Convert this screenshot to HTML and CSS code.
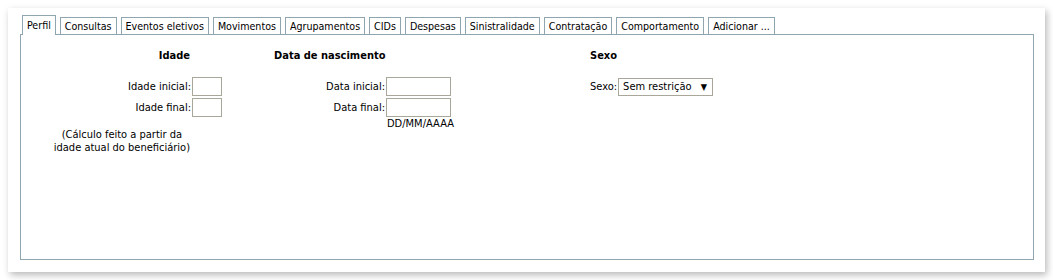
FILE: index.html
```html
<!DOCTYPE html>
<html lang="pt">
<head>
<meta charset="utf-8">
<link rel="stylesheet" href="styles.css">
</head>
<body>
<div class="card">
  <div class="tabs">
    <span class="tab active">Perfil</span>
    <span class="tab">Consultas</span>
    <span class="tab">Eventos eletivos</span>
    <span class="tab">Movimentos</span>
    <span class="tab">Agrupamentos</span>
    <span class="tab">CIDs</span>
    <span class="tab">Despesas</span>
    <span class="tab">Sinistralidade</span>
    <span class="tab">Contratação</span>
    <span class="tab">Comportamento</span>
    <span class="tab">Adicionar ...</span>
  </div>
  <div class="panel">
    <div class="col col-idade">
      <div class="heading">Idade</div>
      <div class="row"><label>Idade inicial:</label><span class="input small"></span></div>
      <div class="row"><label>Idade final:</label><span class="input small"></span></div>
      <div class="note">(Cálculo feito a partir da<br>idade atual do beneficiário)</div>
    </div>
    <div class="col col-data">
      <div class="heading">Data de nascimento</div>
      <div class="row"><label>Data inicial:</label><span class="input wide"></span></div>
      <div class="row"><label>Data final:</label><span class="input wide"></span></div>
      <div class="hint">DD/MM/AAAA</div>
    </div>
    <div class="col col-sexo">
      <div class="heading">Sexo</div>
      <div class="row"><label>Sexo:</label><span class="select">Sem restrição<span class="arrow">▼</span></span></div>
    </div>
  </div>
</div>
</body>
</html>
```

FILE: styles.css
```css
* { box-sizing: border-box; }
html, body { margin: 0; padding: 0; background: #fff; }
body {
  padding: 8px;
  font-family: "DejaVu Sans Condensed", "DejaVu Sans", sans-serif;
  font-stretch: condensed;
  font-size: 11px;
  color: #000;
}
.card {
  width: 1037px;
  height: 264px;
  background: #fff;
  box-shadow: 2px 3px 7px rgba(0, 0, 0, 0.28);
  padding: 7px 11px 12px 12px;
  display: flex;
  flex-direction: column;
}
.tabs {
  display: flex;
  align-items: flex-end;
  gap: 4px;
  padding-left: 2px;
  height: 19px;
  position: relative;
  z-index: 1;
  font-size: 10.6px;
}
.tab {
  display: block;
  height: 17px;
  line-height: 17px;
  padding: 0 4px;
  border: 1px solid #8fa5b0;
  border-bottom: none;
  background: #fff;
  white-space: nowrap;
}
.tab.active {
  height: 20px;
  line-height: 19px;
  margin-bottom: -1px;
}
.panel {
  flex: 1;
  border: 1px solid #8fa5b0;
  display: flex;
  padding-top: 14px;
}
.heading {
  font-family: "DejaVu Sans Condensed", "DejaVu Sans", sans-serif;
  font-stretch: condensed;
  font-weight: bold;
  font-size: 11px;
  height: 27px;
}
.row {
  display: flex;
  align-items: center;
  height: 21px;
}
.row label { white-space: nowrap; }
.input {
  display: block;
  height: 19px;
  border: 1px solid #a9a79a;
  background: #fff;
  margin-left: 1px;
}
.input.small { width: 30px; }
.input.wide { width: 65px; }
.col-idade {
  width: 201px;
  display: flex;
  flex-direction: column;
  align-items: flex-end;
}
.col-idade .heading { margin-right: 32px; }
.col-idade .note {
  text-align: center;
  margin-top: 10px;
  margin-right: 32px;
  line-height: 13px;
}
.col-data {
  width: 200px;
  display: flex;
  flex-direction: column;
  align-items: flex-end;
  margin-left: 29px;
}
.col-data .heading { align-self: flex-start; margin-left: 23px; }
.col-data .hint { width: 65px; padding-left: 1px; line-height: 11px; }
.col-sexo {
  margin-left: 139px;
  display: flex;
  flex-direction: column;
}
.select {
  display: flex;
  align-items: center;
  justify-content: space-between;
  width: 95px;
  height: 18px;
  border: 1px solid #a9a79a;
  margin-left: 1px;
  padding: 0 5px 0 4px;
  white-space: nowrap;
}
.arrow { font-size: 9px; }
```
